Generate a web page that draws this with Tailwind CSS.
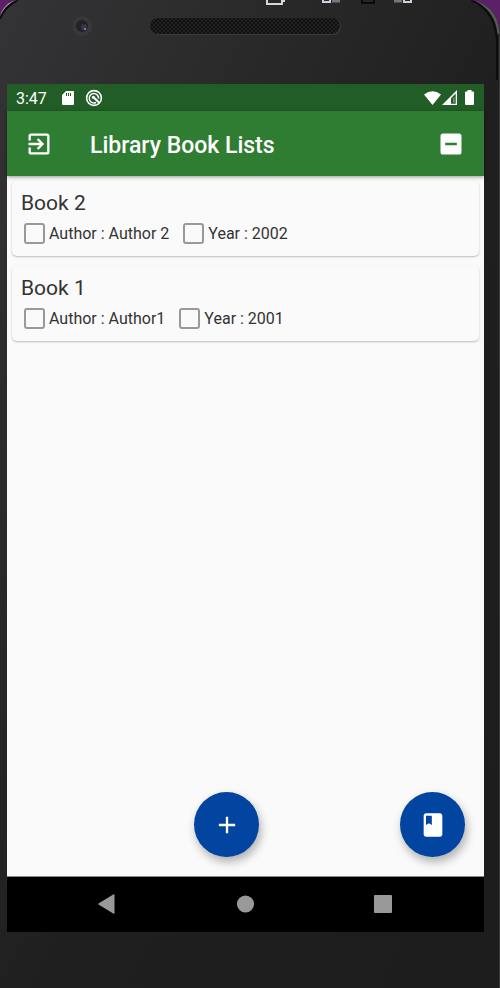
<!DOCTYPE html>
<html lang="en">
<head>
<meta charset="utf-8">
<meta name="viewport" content="width=device-width, initial-scale=1">
<title>Library Book Lists</title>
<script src="https://cdn.jsdelivr.net/npm/@tailwindcss/browser@4"></script>
</head>
<body class="bg-[#5c2068] font-[Roboto,sans-serif]">
<div class="relative flex min-h-screen flex-col overflow-hidden rounded-tl-[20px] rounded-tr-[32px] border-r border-[#3c3c3c] bg-linear-to-br from-[#343436] via-[#1f1f1f] via-55% to-[#1d1d1e] pr-[15px] pl-[7px]">

  <!-- Phone top: metal rim at the corners, camera, speaker, clipped emulator toolbar -->
  <svg class="absolute top-0 left-0 size-8" viewBox="0 0 32 32" fill="none" aria-hidden="true">
    <path d="M0 15Q4 4 15 0" stroke="#aaa" stroke-width="2"/>
    <path d="M0 19Q5 6 18 0" stroke="#0c0c0c" stroke-width="2"/>
  </svg>
  <svg class="absolute top-0 right-0 h-20 w-8" viewBox="0 0 32 80" fill="none" aria-hidden="true">
    <path d="M8 0Q30 9 32 34" stroke="#5a5a5a" stroke-width="3"/>
    <path d="M4 0Q28 10 30 40V80" stroke="#0c0c0c" stroke-width="2"/>
  </svg>
  <div class="relative h-[84px] shrink-0">
    <svg class="absolute top-0 left-0 h-[84px] w-full" aria-hidden="true">
      <defs>
        <pattern id="mesh" width="4" height="4" patternUnits="userSpaceOnUse">
          <rect width="4" height="4" fill="#202020"/>
          <circle cx="1" cy="1" r="1" fill="#0c0c0c"/>
          <circle cx="3" cy="3" r="1" fill="#0c0c0c"/>
        </pattern>
      </defs>
      <circle cx="75" cy="26" r="10" fill="#38383a"/>
      <circle cx="75" cy="26" r="6" fill="#222228"/>
      <circle cx="77" cy="27" r="3" fill="#34344a"/>
      <circle cx="78" cy="29" r="1" fill="#9a9aa8"/>
      <rect x="144" y="19" width="190" height="16" rx="8" fill="#3a3a3a"/>
      <rect x="143" y="18" width="190" height="16" rx="8" fill="url(#mesh)"/>
      <path d="M260 0v4h15V1h3" fill="none" stroke="#d6d6dc" stroke-width="2"/>
      <path d="M316 0v2h7V0" fill="none" stroke="#d0d0da" stroke-width="2"/>
      <path d="M325 1h8" stroke="#75757c" stroke-width="3"/>
      <path d="M355 0v3h12V0" fill="none" stroke="#0a0a0a" stroke-width="2"/>
      <path d="M387 1h8" stroke="#75757c" stroke-width="3"/>
      <path d="M397 0v2h7V0" fill="none" stroke="#d0d0da" stroke-width="2"/>
    </svg>
  </div>

  <div class="flex grow flex-col bg-[#fafafa]">
    <div class="flex h-[27px] items-center bg-[#225d27] pr-2 pl-[9px] text-white">
      <span class="pt-[2px] text-base">3:47</span>
      <svg class="ml-[13px] size-4" viewBox="0 0 16 16" fill="#fff" aria-hidden="true">
        <path fill-rule="evenodd" d="M6 1h7a1 1 0 0 1 1 1v12a1 1 0 0 1-1 1H3a1 1 0 0 1-1-1V5zM6 3v3h1V3zM8 3v3h1V3zM10 3v3h1V3z"/>
      </svg>
      <svg class="ml-[9px] size-[18px]" viewBox="0 0 18 18" fill="none" stroke="#fff" aria-hidden="true">
        <circle cx="9" cy="9" r="7.400" stroke-width="1.600"/>
        <path d="M11 13.500A4.700 4.700 0 1 1 13.600 9.600" stroke-width="1.500"/>
        <path d="M8 7.800l6.500 6.200" stroke-width="2.200"/>
        <circle cx="8.300" cy="8.300" r="1.500" fill="#fff" stroke="none"/>
      </svg>
      <svg class="ml-auto h-[18px] w-[54px]" viewBox="0 0 54 18" fill="#fff" aria-hidden="true">
        <path d="M2 5.500Q10.500-1 19 5.500L10.500 16z"/>
        <path fill-rule="evenodd" d="M35 1v15H20zM33.700 4.500L29 9.200v5.500h4.700z"/>
        <path d="M31 9.200l1.500-1.500v6H31z" fill="#78967b"/>
        <path d="M45.500 1h4v1.500H51a1 1 0 0 1 1 1V15a1 1 0 0 1-1 1h-7a1 1 0 0 1-1-1V3.500a1 1 0 0 1 1-1h1.500z"/>
      </svg>
    </div>

    <header class="z-10 flex h-[65px] items-center bg-[#2f7d33] pr-[19px] pl-[18px] text-white shadow-[0_1px_4px_rgba(0,0,0,0.4)]">
      <button type="button" aria-label="Exit" class="size-7">
        <svg class="size-7" viewBox="0 0 24 24" fill="currentColor"><path d="M10.090 15.590L11.500 17l5-5-5-5-1.410 1.410L12.670 11H3v2h9.670l-2.580 2.590zM19 3H5c-1.110 0-2 .9-2 2v4h2V5h14v14H5v-4H3v4c0 1.100.89 2 2 2h14c1.100 0 2-.9 2-2V5c0-1.100-.9-2-2-2z"/></svg>
      </button>
      <h1 class="ml-[37px] grow pt-1 text-[23px] leading-7 font-medium">Library Book Lists</h1>
      <button type="button" aria-label="Remove" class="size-7">
        <svg class="size-7" viewBox="0 0 24 24" fill="currentColor"><path d="M19 3H5c-1.100 0-2 .9-2 2v14c0 1.100.9 2 2 2h14c1.100 0 2-.9 2-2V5c0-1.100-.9-2-2-2zm-2 10H7v-2h10v2z"/></svg>
      </button>
    </header>

    <main class="flex grow flex-col">
      <ul class="flex grow flex-col gap-[10px] px-[5px] pt-[5px]">
        <li class="rounded-[5px] bg-[#fafafa] px-[9px] pt-2 pb-[11px] text-[#333] shadow-[0_1px_2px_rgba(0,0,0,0.25)]">
          <h2 class="text-[21px] leading-7">Book 2</h2>
          <div class="mt-1 flex gap-[14px] pl-[3px] text-base leading-[22px]">
            <label class="flex items-center gap-1"><input type="checkbox" class="size-[21px] appearance-none rounded-[3px] border-2 border-[#999] checked:bg-[#2f7d33]"><span class="pt-[2px]">Author : Author 2</span></label>
            <label class="flex items-center gap-1"><input type="checkbox" class="size-[21px] appearance-none rounded-[3px] border-2 border-[#999] checked:bg-[#2f7d33]"><span class="pt-[2px]">Year : 2002</span></label>
          </div>
        </li>
        <li class="rounded-[5px] bg-[#fafafa] px-[9px] pt-2 pb-[11px] text-[#333] shadow-[0_1px_2px_rgba(0,0,0,0.25)]">
          <h2 class="text-[21px] leading-7">Book 1</h2>
          <div class="mt-1 flex gap-[14px] pl-[3px] text-base leading-[22px]">
            <label class="flex items-center gap-1"><input type="checkbox" class="size-[21px] appearance-none rounded-[3px] border-2 border-[#999] checked:bg-[#2f7d33]"><span class="pt-[2px]">Author : Author1</span></label>
            <label class="flex items-center gap-1"><input type="checkbox" class="size-[21px] appearance-none rounded-[3px] border-2 border-[#999] checked:bg-[#2f7d33]"><span class="pt-[2px]">Year : 2001</span></label>
          </div>
        </li>
      </ul>
      <div class="flex justify-between pr-[19px] pb-[19px] pl-[187px]">
        <button type="button" aria-label="Add book" class="flex size-[65px] items-center justify-center rounded-full bg-[#0245a0] text-white shadow-[2px_5px_10px_rgba(0,0,0,0.3)]">
          <svg class="size-7" viewBox="0 0 24 24" fill="currentColor"><path d="M19 13h-6v6h-2v-6H5v-2h6V5h2v6h6v2z"/></svg>
        </button>
        <button type="button" aria-label="Books" class="flex size-[65px] items-center justify-center rounded-full bg-[#0245a0] text-white shadow-[2px_5px_10px_rgba(0,0,0,0.3)]">
          <svg class="size-7" viewBox="0 0 24 24" fill="currentColor"><path d="M18 2H6c-1.100 0-2 .9-2 2v16c0 1.100.9 2 2 2h12c1.100 0 2-.9 2-2V4c0-1.100-.9-2-2-2zM6 4h5v8l-2.500-1.500L6 12V4z"/></svg>
        </button>
      </div>
    </main>

    <nav class="flex h-14 items-center justify-center border-t border-[#888] bg-black pb-[2px] text-[#999]">
      <button type="button" aria-label="Back" class="flex w-[138px] justify-center"><svg class="size-5" viewBox="0 0 20 20" fill="currentColor"><path d="M16.500.8v18.400q0 .8-.8.500L.8 10.800q-1-.8 0-1.600L15.700.3q.8-.3.800.5z"/></svg></button>
      <button type="button" aria-label="Home" class="flex w-[138px] justify-center"><svg class="size-5" viewBox="0 0 20 20" fill="currentColor"><circle cx="9.500" cy="10" r="8.600"/></svg></button>
      <button type="button" aria-label="Recent apps" class="flex w-[138px] justify-center"><svg class="size-5" viewBox="0 0 20 20" fill="currentColor"><rect x="0" y="1" width="18" height="18" rx="1"/></svg></button>
    </nav>
  </div>
  <div class="h-14 shrink-0"></div>
</div>
</body>
</html>
